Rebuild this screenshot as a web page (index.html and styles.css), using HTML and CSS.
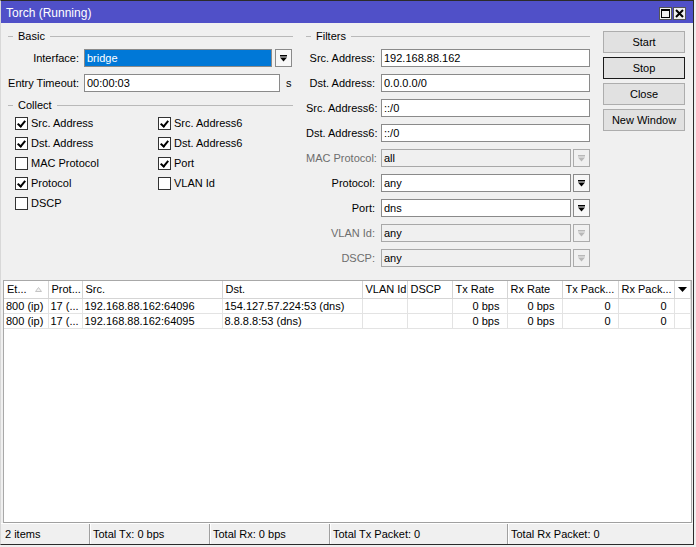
FILE: index.html
```html
<!DOCTYPE html>
<html>
<head>
<meta charset="utf-8">
<link rel="stylesheet" href="styles.css">
</head>
<body>
<div class="window">
  <div class="titlebar">
    <span class="title">Torch (Running)</span>
    <div class="tbtns">
      <span class="tbtn"><svg width="9" height="9" viewBox="0 0 9 9"><rect x="0.5" y="0.5" width="8" height="8" fill="none" stroke="#000"/><rect x="0" y="0" width="9" height="2" fill="#000"/></svg></span>
      <span class="tbtn"><svg width="9" height="9" viewBox="0 0 9 9"><path d="M1 1 L8 8 M8 1 L1 8" stroke="#000" stroke-width="2"/></svg></span>
    </div>
  </div>
  <div class="top">
    <div class="col-left">
      <div class="legend"><span class="lline lead"></span><span class="ltext">Basic</span><span class="lline"></span></div>
      <div class="frow">
        <span class="lbl">Interface:</span>
        <div class="field selected w-iface">bridge</div>
        <div class="ddbtn"><svg width="7" height="7" viewBox="0 0 7 7"><rect x="0" y="0" width="7" height="1.5" fill="#000"/><path d="M0 2.5 H7 L3.5 6.5 Z" fill="#000"/></svg></div>
      </div>
      <div class="frow tight">
        <span class="lbl">Entry Timeout:</span>
        <div class="field w-timeout">00:00:03</div>
        <span class="unit">s</span>
      </div>
      <div class="legend legend-collect"><span class="lline lead"></span><span class="ltext">Collect</span><span class="lline"></span></div>
      <div class="checks">
        <div class="chk"><span class="box on"></span>Src. Address</div>
        <div class="chk"><span class="box on"></span>Src. Address6</div>
        <div class="chk"><span class="box on"></span>Dst. Address</div>
        <div class="chk"><span class="box on"></span>Dst. Address6</div>
        <div class="chk"><span class="box"></span>MAC Protocol</div>
        <div class="chk"><span class="box on"></span>Port</div>
        <div class="chk"><span class="box on"></span>Protocol</div>
        <div class="chk"><span class="box"></span>VLAN Id</div>
        <div class="chk"><span class="box"></span>DSCP</div>
      </div>
    </div>
    <div class="col-filters">
      <div class="legend"><span class="lline lead"></span><span class="ltext">Filters</span><span class="lline"></span></div>
      <div class="frow">
        <span class="lbl flbl">Src. Address:</span>
        <div class="field w-full">192.168.88.162</div>
      </div>
      <div class="frow">
        <span class="lbl flbl">Dst. Address:</span>
        <div class="field w-full">0.0.0.0/0</div>
      </div>
      <div class="frow">
        <span class="lbl flbl">Src. Address6:</span>
        <div class="field w-full">::/0</div>
      </div>
      <div class="frow">
        <span class="lbl flbl">Dst. Address6:</span>
        <div class="field w-full">::/0</div>
      </div>
      <div class="frow">
        <span class="lbl flbl disabled">MAC Protocol:</span>
        <div class="field w-dd dis">all</div>
        <div class="ddbtn dis"><svg width="7" height="7" viewBox="0 0 7 7"><rect x="0" y="0" width="7" height="1.5" fill="#b8b8b8"/><path d="M0 2.5 H7 L3.5 6.5 Z" fill="#b8b8b8"/></svg></div>
      </div>
      <div class="frow">
        <span class="lbl flbl">Protocol:</span>
        <div class="field w-dd">any</div>
        <div class="ddbtn"><svg width="7" height="7" viewBox="0 0 7 7"><rect x="0" y="0" width="7" height="1.5" fill="#000"/><path d="M0 2.5 H7 L3.5 6.5 Z" fill="#000"/></svg></div>
      </div>
      <div class="frow">
        <span class="lbl flbl">Port:</span>
        <div class="field w-dd">dns</div>
        <div class="ddbtn"><svg width="7" height="7" viewBox="0 0 7 7"><rect x="0" y="0" width="7" height="1.5" fill="#000"/><path d="M0 2.5 H7 L3.5 6.5 Z" fill="#000"/></svg></div>
      </div>
      <div class="frow">
        <span class="lbl flbl disabled">VLAN Id:</span>
        <div class="field w-dd dis">any</div>
        <div class="ddbtn dis"><svg width="7" height="7" viewBox="0 0 7 7"><rect x="0" y="0" width="7" height="1.5" fill="#b8b8b8"/><path d="M0 2.5 H7 L3.5 6.5 Z" fill="#b8b8b8"/></svg></div>
      </div>
      <div class="frow last">
        <span class="lbl flbl disabled">DSCP:</span>
        <div class="field w-dd dis">any</div>
        <div class="ddbtn dis"><svg width="7" height="7" viewBox="0 0 7 7"><rect x="0" y="0" width="7" height="1.5" fill="#b8b8b8"/><path d="M0 2.5 H7 L3.5 6.5 Z" fill="#b8b8b8"/></svg></div>
      </div>
    </div>
    <div class="col-buttons">
      <div class="btn">Start</div>
      <div class="btn default">Stop</div>
      <div class="btn">Close</div>
      <div class="btn">New Window</div>
    </div>
  </div>
  <div class="grid-wrap">
    <table class="grid">
      <colgroup>
        <col class="c-et"><col class="c-prot"><col class="c-src"><col class="c-dst"><col class="c-vlan"><col class="c-dscp"><col class="c-rate"><col class="c-rate"><col class="c-pk"><col class="c-pk"><col class="c-menu">
      </colgroup>
      <thead>
        <tr>
          <th><span class="th-sort">Et...<svg class="sorticon" width="7" height="5" viewBox="0 0 7 5"><path d="M0.5 4.5 L3.5 0.5 L6.5 4.5 Z" fill="#f2f2f2" stroke="#c4c4c4"/></svg></span></th>
          <th>Prot...</th>
          <th>Src.</th>
          <th>Dst.</th>
          <th>VLAN Id</th>
          <th>DSCP</th>
          <th>Tx Rate</th>
          <th>Rx Rate</th>
          <th>Tx Pack...</th>
          <th>Rx Pack...</th>
          <th class="th-menu"><svg width="9" height="5" viewBox="0 0 9 5"><path d="M0 0 H9 L4.5 5 Z" fill="#000"/></svg></th>
        </tr>
      </thead>
      <tbody>
        <tr>
          <td>800 (ip)</td><td>17 (...</td><td>192.168.88.162:64096</td><td>154.127.57.224:53 (dns)</td><td></td><td></td><td class="num">0 bps</td><td class="num">0 bps</td><td class="num">0</td><td class="num">0</td><td></td>
        </tr>
        <tr>
          <td>800 (ip)</td><td>17 (...</td><td>192.168.88.162:64095</td><td>8.8.8.8:53 (dns)</td><td></td><td></td><td class="num">0 bps</td><td class="num">0 bps</td><td class="num">0</td><td class="num">0</td><td></td>
        </tr>
      </tbody>
    </table>
  </div>
  <div class="status">
    <div class="sec s1">2 items</div>
    <div class="sec s2">Total Tx: 0 bps</div>
    <div class="sec s3">Total Rx: 0 bps</div>
    <div class="sec s4">Total Tx Packet: 0</div>
    <div class="sec s5">Total Rx Packet: 0</div>
  </div>
</div>
</body>
</html>
```

FILE: styles.css
```css
* { box-sizing: border-box; }
html, body { margin: 0; padding: 0; }
body {
  background: #f0f0f0;
  font-family: "Liberation Sans", Arial, sans-serif;
  font-size: 11px;
  color: #000;
  width: 696px;
  height: 547px;
  overflow: hidden;
}
.window {
  width: 694px;
  height: 545px;
  display: flex;
  flex-direction: column;
  background: #f0f0f0;
  border-top: 1px solid #2b2b2b;
  border-left: 1px solid #d8d8d8;
  border-right: 1px solid #2b2b2b;
  border-bottom: 1px solid #2b2b2b;
}
.titlebar {
  height: 22px;
  background: #5050c8;
  display: flex;
  align-items: center;
  justify-content: space-between;
  padding: 0 7px 0 5px;
  flex: none;
}
.title {
  color: #fff;
  font-size: 12px;
  padding-top: 2px;
}
.tbtns { display: flex; gap: 1px; padding-top: 2px; }
.tbtn {
  width: 13px; height: 13px;
  background: #f0f0f0;
  border: 1px solid #555;
  display: flex; align-items: center; justify-content: center;
}
.top {
  display: flex;
  padding: 6px 0 0 7px;
  flex: none;
}
.col-left { width: 285px; }
.col-filters { width: 284px; margin-left: 13px; }
.col-buttons { width: 82px; margin-left: 13px; padding-top: 2px; display: flex; flex-direction: column; gap: 4px; }
.legend {
  height: 14px;
  display: flex;
  align-items: center;
  margin-bottom: 6px;
}
.legend-collect { margin-top: 0; margin-bottom: 1px; }
.lline { flex: 1; height: 1px; background: #b9b9b9; }
.lline.lead { flex: none; width: 5px; }
.ltext { padding: 0 5px; }
.frow {
  display: flex;
  align-items: center;
  height: 18px;
  margin-bottom: 7px;
}
.frow.tight { margin-bottom: 6px; }
.frow.last { margin-bottom: 0; }
.lbl {
  width: 71px;
  text-align: right;
  margin-right: 5px;
  white-space: nowrap;
}
.flbl { width: 69px; margin-right: 6px; }
.disabled { color: #6d6d6d; }
.field {
  height: 18px;
  background: #fff;
  border: 1px solid #8a8a8a;
  padding-left: 2px;
  line-height: 16px;
  white-space: nowrap;
}
.field.dis { background: #f0f0f0; border-color: #a8a8a8; }
.field.selected { background: #0078d7; color: #fff; }
.w-iface { width: 188px; }
.w-timeout { width: 196px; }
.w-full { width: 209px; }
.w-dd { width: 190px; }
.unit { margin-left: 6px; }
.ddbtn {
  width: 17px; height: 18px;
  margin-left: 2px;
  background: #f7f7f7;
  border: 1px solid #8a8a8a;
  display: flex; align-items: center; justify-content: center;
}
.col-left .ddbtn { margin-left: 3px; }
.ddbtn.dis { border-color: #ababab; background: #f0f0f0; }
.checks {
  display: grid;
  grid-template-columns: 143px 120px;
  grid-auto-rows: 20px;
}
.chk {
  display: flex;
  align-items: center;
  padding-left: 7px;
  white-space: nowrap;
}
.box {
  width: 13px; height: 13px;
  border: 1px solid #333;
  background: #fff;
  margin-right: 3px;
  position: relative;
  flex: none;
}
.box.on::after {
  content: "";
  position: absolute;
  left: 3px; top: 1px;
  width: 3px; height: 6px;
  border-right: 2px solid #000;
  border-bottom: 2px solid #000;
  transform: rotate(40deg);
}
.btn {
  height: 22px;
  background: #e1e1e1;
  border: 1px solid #adadad;
  display: flex; align-items: center; justify-content: center;
  font-size: 11px;
}
.btn.default { border-color: #1a1a1a; }
.grid-wrap {
  flex: 1;
  margin: 13px 1px 0 2px;
  background: #fff;
  border: 1px solid #a8a8a8;
  border-bottom: 1px solid #a0a0a0;
  overflow: hidden;
}
.grid {
  border-collapse: collapse;
  table-layout: fixed;
  width: 686px;
}
.c-et { width: 44px; }
.c-prot { width: 34px; }
.c-src { width: 140px; }
.c-dst { width: 140px; }
.c-vlan { width: 45px; }
.c-dscp { width: 45px; }
.c-rate { width: 55px; }
.c-pk { width: 56px; }
.c-menu { width: 16px; }
.grid th {
  height: 17px;
  font-weight: normal;
  text-align: left;
  padding: 0 0 0 3px;
  border-right: 1px solid #d5d5d5;
  border-bottom: 1px solid #d5d5d5;
  background: #fff;
  white-space: nowrap;
  overflow: hidden;
}
.th-sort { display: flex; align-items: center; }
.sorticon { margin-left: 8px; }
.th-menu { text-align: center !important; padding: 0 !important; }
.th-menu svg { display: block; margin: 0 auto; }
.grid td {
  height: 15px;
  padding: 0 0 0 2px;
  border-right: 1px solid #e3e3e3;
  border-bottom: 1px solid #e3e3e3;
  white-space: nowrap;
  overflow: hidden;
}
.grid td.num { text-align: right; padding: 0 7px 0 0; }
.status {
  flex: none;
  height: 21px;
  display: flex;
  align-items: center;
  border-top: 1px solid #fff;
}
.sec {
  height: 100%;
  display: flex;
  align-items: center;
  padding-left: 3px;
  border-right: 1px solid #a0a0a0;
  box-shadow: 1px 0 0 #fff;
  white-space: nowrap;
}
.s1 { width: 89px; padding-left: 4px; }
.s2 { width: 120px; }
.s3 { width: 120px; }
.s4 { width: 178px; }
.s5 { flex: 1; border-right: none; box-shadow: none; }
```
